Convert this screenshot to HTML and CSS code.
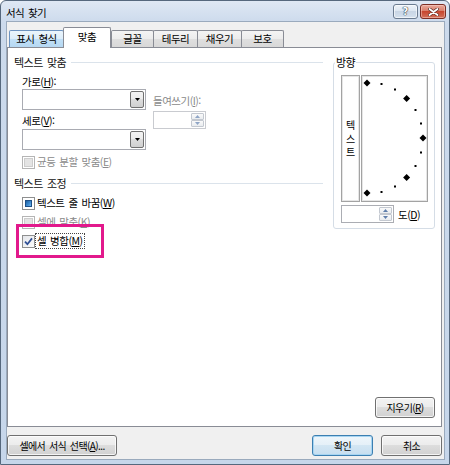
FILE: index.html
```html
<!DOCTYPE html>
<html lang="ko">
<head>
<meta charset="utf-8">
<title>서식 찾기</title>
<link rel="stylesheet" href="styles.css">
</head>
<body>
<div class="window">
  <div class="titlebar">
    <span class="title">서식 찾기</span>
    <span class="cap-btn help">?</span>
    <span class="cap-btn close"><svg width="11" height="8" viewBox="0 0 11 8"><path d="M1.5 1L9.5 7M9.5 1L1.5 7" stroke="#5a2a22" stroke-width="3.2" stroke-linecap="round"/><path d="M1.5 1L9.5 7M9.5 1L1.5 7" stroke="#fff" stroke-width="1.8" stroke-linecap="round"/></svg></span>
  </div>
  <div class="client">
    <div class="tabs">
      <div class="tab tab-hover w55">표시 형식</div>
      <div class="tab tab-active w48">맞춤</div>
      <div class="tab w43">글꼴</div>
      <div class="tab w45 shared">테두리</div>
      <div class="tab w45 shared">채우기</div>
      <div class="tab w43 shared">보호</div>
    </div>
    <div class="panel">
      <div class="panel-body">
        <div class="left">
          <div class="section"><span>텍스트 맞춤</span><i class="rule"></i></div>
          <div class="align-block">
            <div class="subcol">
              <div class="lbl">가로(<u>H</u>):</div>
              <div class="combo"><span class="drop"><svg width="5" height="3" viewBox="0 0 5 3"><path d="M0 0H5L2.5 3Z" fill="#000"/></svg></span></div>
              <div class="lbl lbl2">세로(<u>V</u>):</div>
              <div class="combo"><span class="drop"><svg width="5" height="3" viewBox="0 0 5 3"><path d="M0 0H5L2.5 3Z" fill="#000"/></svg></span></div>
            </div>
            <div class="indent">
              <div class="lbl dis">들여쓰기(<u>I</u>):</div>
              <div class="spin spin-dis">
                <span class="spin-btns">
                  <span class="spin-btn"><svg width="5" height="3" viewBox="0 0 5 3"><path d="M0 3H5L2.5 0Z" fill="#8fa5c6"/></svg></span>
                  <span class="spin-btn"><svg width="5" height="3" viewBox="0 0 5 3"><path d="M0 0H5L2.5 3Z" fill="#8fa5c6"/></svg></span>
                </span>
              </div>
            </div>
          </div>
          <div class="check-row row-first dis"><span class="cb cb-dis"><i></i></span><span class="cl">균등 분할 맞춤(<u>E</u>)</span></div>
          <div class="section sec2"><span>텍스트 조정</span><i class="rule"></i></div>
          <div class="check-row row-wrap"><span class="cb cb-ind"><i></i></span><span class="cl">텍스트 줄 바꿈(<u>W</u>)</span></div>
          <div class="check-row dis"><span class="cb cb-dis"><i></i></span><span class="cl">셀에 맞춤(<u>K</u>)</span></div>
          <div class="check-row"><span class="cb cb-chk"><svg width="11" height="11" viewBox="0 0 11 11"><path d="M2 5.6L4.4 8.2L9 2.4" stroke="#2f4f95" stroke-width="1.7" fill="none"/></svg></span><span class="cl focus">셀 병합(<u>M</u>)</span></div>
        </div>
        <div class="orient">
          <span class="legend">방향</span>
          <div class="dial-row">
            <div class="vtext"><span>텍</span><span>스</span><span>트</span></div>
            <div class="dial">
              <svg width="65" height="125" viewBox="0 0 65 125">
                <g fill="#000">
                  <path d="M5 3.5L8.5 7L5 10.5L1.5 7Z"/>
                  <path d="M44.6 19L48.1 22.5L44.6 26L41.1 22.5Z"/>
                  <path d="M61 58.5L64.5 62L61 65.5L57.5 62Z"/>
                  <path d="M44.6 98L48.1 101.5L44.6 105L41.1 101.5Z"/>
                  <path d="M5 113.5L8.5 117L5 120.5L1.5 117Z"/>
                  <rect x="18.5" y="7" width="2" height="2"/>
                  <rect x="32" y="12.5" width="2" height="2"/>
                  <rect x="52.5" y="33" width="2" height="2"/>
                  <rect x="58" y="46.5" width="2" height="2"/>
                  <rect x="58" y="75.5" width="2" height="2"/>
                  <rect x="52.5" y="89" width="2" height="2"/>
                  <rect x="32" y="109.5" width="2" height="2"/>
                  <rect x="18.5" y="115" width="2" height="2"/>
                </g>
              </svg>
            </div>
          </div>
          <div class="deg-row">
            <div class="spin">
              <span class="spin-btns">
                <span class="spin-btn"><svg width="5" height="3" viewBox="0 0 5 3"><path d="M0 3H5L2.5 0Z" fill="#5f7eab"/></svg></span>
                <span class="spin-btn"><svg width="5" height="3" viewBox="0 0 5 3"><path d="M0 0H5L2.5 3Z" fill="#5f7eab"/></svg></span>
              </span>
            </div>
            <span class="deg">도(<u>D</u>)</span>
          </div>
        </div>
      </div>
      <div class="panel-foot"><button class="btn w60">지우기(<u>R</u>)</button></div>
    </div>
    <div class="buttons">
      <button class="btn w110">셀에서 서식 선택(<u>A</u>)...</button>
      <span class="spacer"></span>
      <button class="btn btn-default w61">확인</button>
      <button class="btn w61">취소</button>
    </div>
  </div>
</div>
<div class="highlight"></div>
</body>
</html>
```
FILE: styles.css
```css
* { box-sizing: border-box; }
html, body { margin: 0; padding: 0; }
body {
  width: 450px;
  height: 465px;
  position: relative;
  overflow: hidden;
  background: #fff;
  font-family: "Noto Sans CJK KR", "Noto Sans", sans-serif;
  font-size: 10.5px;
  letter-spacing: -0.5px;
  word-spacing: 1.5px;
  color: #000;
}
u { text-decoration: underline; text-underline-offset: 1px; }

.window {
  width: 450px;
  height: 465px;
  border: 1px solid #56687d;
  border-radius: 6px 6px 0 0;
  background: linear-gradient(to bottom, #dfe8f4 0, #ccdaec 22px, #c6d6ea 100%);
  padding: 0 4px 4px 5px;
  display: flex;
  flex-direction: column;
}

.titlebar {
  height: 20px;
  margin: 0 -4px 0 -5px;
  padding: 3px 0 0 5px;
  display: flex;
  align-items: flex-start;
}
.title { flex: 1; line-height: 16px; font-size: 10.5px; letter-spacing: -0.6px; padding-top: 1px; }
.cap-btn {
  height: 15px;
  border-radius: 3px;
  display: flex;
  align-items: center;
  justify-content: center;
}
.help {
  width: 25px;
  margin-right: 2px;
  border: 1px solid #6a7b90;
  background: linear-gradient(to bottom, #eef3f9 0%, #dbe5f0 50%, #c9d6e5 50%, #d5e1ee 100%);
  box-shadow: inset 0 0 0 1px rgba(255,255,255,0.6);
  font-family: "DejaVu Sans", sans-serif;
  font-weight: bold;
  font-size: 10px;
  letter-spacing: 0;
  color: #fff;
  text-shadow: 0 0 1px #2c3845, 0 0 1px #2c3845, 0 0 1px #2c3845;
}
.close {
  width: 26px;
  margin-right: 3px;
  border: 1px solid #7c2e24;
  background: linear-gradient(to bottom, #e9a99b 0%, #d9806d 45%, #c7462f 50%, #d2705a 100%);
  box-shadow: inset 0 0 0 1px rgba(255,220,210,0.45);
}

.client {
  flex: 1;
  border: 1px solid #9aaabd;
  background: #f0f0f0;
  padding: 5px 2px 0 0;
  display: flex;
  flex-direction: column;
}

.tabs {
  height: 21px;
  margin-bottom: -1px;
  padding-left: 2px;
  display: flex;
  align-items: flex-end;
}
.tab {
  height: 17px;
  margin-bottom: 1px;
  border: 1px solid #898c95;
  border-bottom: none;
  border-radius: 2px 2px 0 0;
  background: linear-gradient(to bottom, #f4f4f4 0%, #ececec 50%, #dfdfdf 50%, #d8d8d8 100%);
  text-align: center;
  line-height: 15px;
  flex: none;
}
.tab-hover {
  border-color: #6d93c0;
  background: linear-gradient(to bottom, #ebf5fc 0%, #dcedfa 50%, #c2e0f7 50%, #b6d8f2 100%);
}
.tab-active {
  height: 21px;
  margin-bottom: 0;
  margin-left: -1px;
  background: #fff;
  position: relative;
  z-index: 1;
  line-height: 18px;
}
.shared { margin-left: -1px; }
.w43 { width: 43px; }
.w45 { width: 45px; }
.w48 { width: 48px; }
.w55 { width: 55px; }

.panel {
  height: 380px;
  border: 1px solid #898c95;
  background: #fff;
  display: flex;
  flex-direction: column;
}
.panel-body {
  display: flex;
  gap: 10px;
  padding: 7px 6px 0 6px;
}
.left {
  width: 309px;
  flex: none;
  display: flex;
  flex-direction: column;
}
.section {
  height: 14px;
  line-height: 14px;
  display: flex;
  align-items: center;
  color: #111;
  font-size: 11px;
}
.rule {
  flex: 1;
  height: 1px;
  margin-left: 5px;
  background: #dbe3eb;
}
.sec2 { margin-top: 7px; }

.align-block {
  display: flex;
  gap: 7px;
  margin: 6px 0 0 8px;
}
.subcol { width: 124px; display: flex; flex-direction: column; }
.lbl { height: 14px; line-height: 14px; }
.lbl2 { margin: 4px 0 1px; }
.combo {
  height: 21px;
  border: 1px solid #a9abb2;
  background: #fff;
  padding: 1px;
  display: flex;
  justify-content: flex-end;
}
.drop {
  width: 14px;
  border: 1px solid #707070;
  border-radius: 2px;
  background: linear-gradient(to bottom, #f3f3f3 0%, #ebebeb 50%, #dddddd 50%, #d0d0d0 100%);
  display: flex;
  align-items: center;
  justify-content: center;
}
.indent { margin-top: 19px; display: flex; flex-direction: column; }
.indent .spin { margin-top: 3px; }

.spin {
  width: 53px;
  height: 18px;
  border: 1px solid #abadb3;
  background: #fff;
  padding: 1px;
  display: flex;
  justify-content: flex-end;
}
.spin-dis { border-color: #c9cbd0; }
.spin-btns { width: 13px; display: flex; flex-direction: column; }
.spin-btn {
  flex: 1;
  border: 1px solid #c3c8d0;
  border-radius: 1px;
  background: linear-gradient(to bottom, #fafafa, #e9ecef);
  display: flex;
  align-items: center;
  justify-content: center;
}

.dis { color: #8a8a8a; }
.check-row {
  height: 14px;
  margin: 5px 0 0 8px;
  display: flex;
  align-items: center;
}
.row-wrap { margin-top: 6px; }
.cl {
  border: 1px dotted transparent;
  padding: 0 1px;
  line-height: 14px;
}
.focus { border-color: #444; }
.cb {
  width: 13px;
  height: 13px;
  flex: none;
  border: 1px solid #8e8f8f;
  background: #fff;
  display: flex;
  align-items: center;
  justify-content: center;
}
.cb i {
  display: block;
  width: 7px;
  height: 7px;
}
.cb-dis { border-color: #b5b5b5; }
.cb-dis i {
  width: 9px;
  height: 9px;
  background: #e4e4e4;
  border: 1px solid #cdcdcd;
}
.cb-ind i {
  background: linear-gradient(135deg, #1f5f9e 0%, #3c8ad0 55%, #72b6ea 100%);
  border: 1px solid #1d4f86;
}
.cb-chk { background: linear-gradient(135deg, #e4e6ea, #fbfbfb); }

.orient {
  width: 102px;
  flex: none;
  align-self: flex-start;
  margin-top: 7px;
  border: 1px solid #d5dde6;
  border-radius: 3px;
  padding: 0 6px 5px 7px;
}
.legend {
  display: block;
  width: max-content;
  margin: -8px 0 0 -6px;
  padding: 0 1px;
  background: #fff;
  line-height: 14px;
  font-size: 11px;
}
.dial-row {
  display: flex;
  gap: 1px;
  margin-top: 6px;
}
.vtext, .dial {
  height: 127px;
  border: 1px solid #a3a3a3;
  box-shadow: inset 0 0 0 1px #e6e6e6;
  background: #fff;
}
.vtext {
  width: 20px;
  display: flex;
  flex-direction: column;
  align-items: center;
  justify-content: center;
  line-height: 13.5px;
  letter-spacing: 0;
  font-size: 10px;
}
.dial { width: 67px; }
.dial svg { display: block; }
.deg-row {
  display: flex;
  align-items: center;
  margin-top: 3px;
}
.deg { margin-left: 4px; }

.panel-foot {
  margin-top: auto;
  padding: 0 6px 8px 0;
  display: flex;
  justify-content: flex-end;
}

.btn {
  height: 21px;
  border: 1px solid #707070;
  border-radius: 3px;
  background: linear-gradient(to bottom, #f3f3f3 0%, #ececec 48%, #dddddd 50%, #d1d1d1 100%);
  box-shadow: inset 0 0 0 1px rgba(255,255,255,0.75);
  font: inherit;
  font-size: 10px;
  letter-spacing: -0.6px;
  word-spacing: inherit;
  color: #000;
  padding: 0;
  flex: none;
}
.btn-default {
  border-color: #3c7fb1;
  box-shadow: inset 0 0 0 1px #a7d5f2;
  background: linear-gradient(to bottom, #eef6fb 0%, #e5f0f8 48%, #d3e6f3 50%, #c6def0 100%);
  margin-right: 8px;
}
.w60 { width: 60px; }
.w61 { width: 61px; }
.w110 { width: 110px; }
.buttons {
  display: flex;
  margin-top: 8px;
}
.spacer { flex: 1; }

.highlight {
  position: absolute;
  left: 16px;
  top: 224px;
  width: 88px;
  height: 34px;
  border: 3px solid #e2198c;
}
```
